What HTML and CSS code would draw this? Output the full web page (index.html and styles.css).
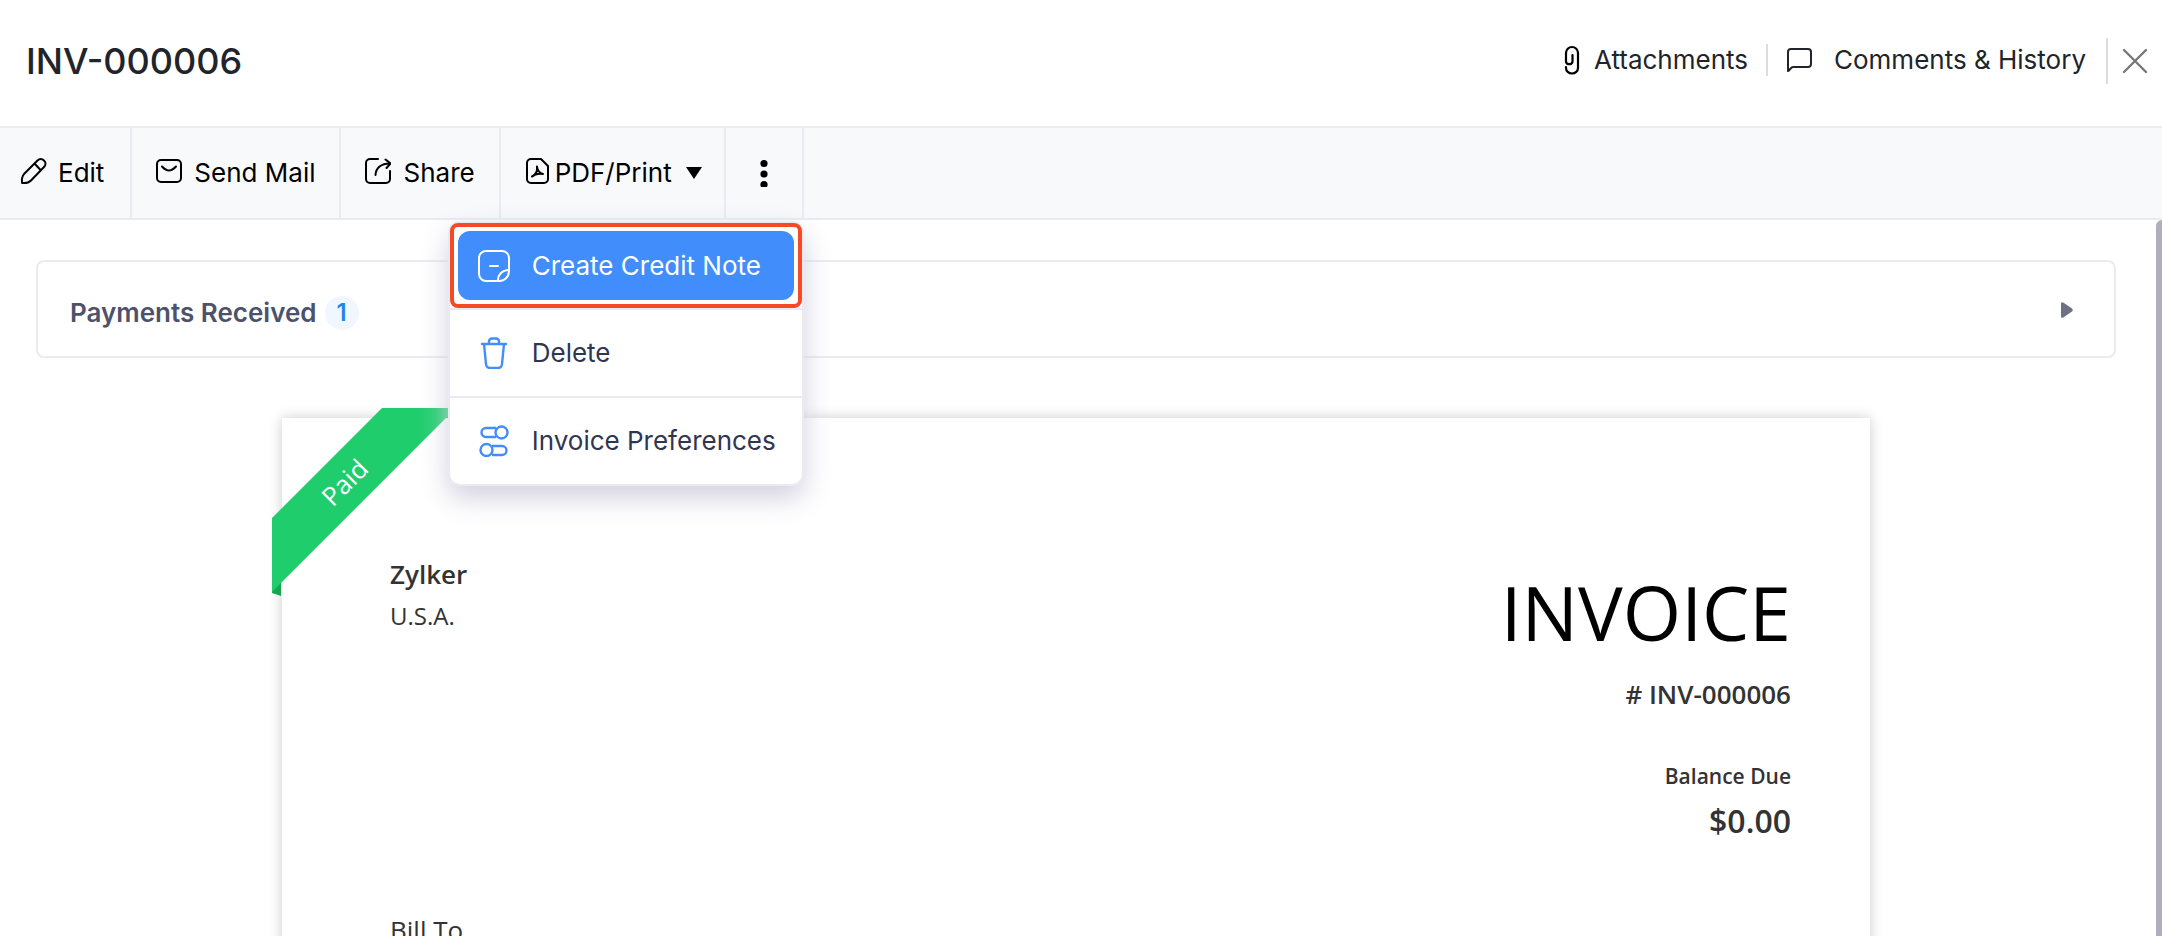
FILE: index.html
```html
<!DOCTYPE html>
<html lang="en">

<head>
    <meta charset="UTF-8">
    <meta name="viewport" content="width=device-width, initial-scale=1.0">
    <title>INV-000006</title>
    <link rel="stylesheet" href="styles.css">
</head>

<body>
    <header class="header">
        <h1>INV-000006</h1>
        <div class="header-actions">
            <button type="button" class="header-btn attachments">
                <svg width="16" height="30" viewBox="0 0 16 30" fill="none" stroke="#000" stroke-width="2.200" stroke-linecap="round">
                    <path d="M2 22v1a6 5.500 0 0 0 12 0V8A6 6 0 0 0 2 8v9a3.500 3.500 0 0 0 6.500 0v-7" />
                </svg>
                Attachments
            </button>
            <button type="button" class="header-btn comments">
                <svg width="26" height="26" viewBox="0 0 26 26" fill="none" stroke="currentColor" stroke-width="2" stroke-linejoin="round">
                    <path d="M2 24V5a3 3 0 0 1 3-3h17a3 3 0 0 1 3 3v12a3 3 0 0 1-3 3H7c-2 0-3 3-5 4z" />
                </svg>
                Comments &amp; History
            </button>
            <button type="button" class="close-btn" aria-label="Close">
                <svg width="26" height="26" viewBox="0 0 26 26" fill="none" stroke="#777" stroke-width="2.400" stroke-linecap="round">
                    <path d="M2 2l22 22M24 2L2 24" />
                </svg>
            </button>
        </div>
    </header>

    <nav class="toolbar">
        <button type="button" class="tool edit">
            <svg class="tool-icon" width="28" height="28" viewBox="0 0 28 28" fill="none" stroke="currentColor" stroke-width="2" stroke-linejoin="round">
                <path d="M2 26c-.4-3.600 0-6.500 2-9L17.500 3.500c2-2 4.500-2 6.500 0s2 4.500 0 6.500L11 23.500c-2.500 2.500-5.500 2.900-9 2.500zM14.500 6.500l6.500 7" />
            </svg>
            Edit
        </button>
        <button type="button" class="tool">
            <svg class="tool-icon" width="28" height="28" viewBox="0 0 28 28" fill="none" stroke="currentColor" stroke-width="2" stroke-linecap="round" stroke-linejoin="round">
                <rect x="3" y="3" width="24" height="22" rx="4" />
                <path d="M8 9.500c5 5.300 9 5.300 14 0" />
            </svg>
            Send Mail
        </button>
        <button type="button" class="tool">
            <svg class="tool-icon" width="28" height="28" viewBox="0 0 28 28" fill="none" stroke="currentColor" stroke-width="2" stroke-linecap="round" stroke-linejoin="round">
                <path d="M15 2H7a4 4 0 0 0-4 4v16a4 4 0 0 0 4 4h16a4 4 0 0 0 4-4v-8" />
                <path d="M12.500 18C13 11 18 6.500 27 6.500M22.500 2.500l5 4-4 4.500" />
            </svg>
            Share
        </button>
        <button type="button" class="tool pdf">
            <svg class="tool-icon" width="24" height="28" viewBox="0 0 24 28" fill="none" stroke="currentColor" stroke-width="2" stroke-linecap="round" stroke-linejoin="round">
                <path d="M6 2h10l7 7v13a4 4 0 0 1-4 4H6a4 4 0 0 1-4-4V6a4 4 0 0 1 4-4z" />
                <path d="M7 19.500C10.500 18 12.500 14 12 9.500c.5 4.500 2.500 6.500 6 7.500-3-.8-6 0-9 1" />
            </svg>
            PDF/Print
            <svg class="caret" width="16" height="12" viewBox="0 0 16 12"><path d="M0 0h16L8 12z" /></svg>
        </button>
        <div class="more">
            <button type="button" class="tool more-btn" aria-label="More" aria-expanded="true">
                <svg width="8" height="28" viewBox="0 0 8 28">
                    <circle cx="4" cy="4.500" r="3.600" />
                    <circle cx="4" cy="15" r="3.600" />
                    <circle cx="4" cy="25.500" r="3.600" />
                </svg>
            </button>
            <ul class="menu">
                <li class="highlighted">
                    <button type="button" class="menu-item active">
                        <svg width="32" height="32" viewBox="0 0 32 32" fill="none" stroke="currentColor" stroke-width="2" stroke-linecap="round" stroke-linejoin="round">
                            <path d="M20 31H8a7 7 0 0 1-7-7V8a7 7 0 0 1 7-7h16a7 7 0 0 1 7 7v13a10 10 0 0 1-11 10z" />
                            <path d="M20 31c-.5-6 4-11 11-11M12 16h8" />
                        </svg>
                        Create Credit Note
                    </button>
                </li>
                <li>
                    <button type="button" class="menu-item">
                        <svg width="32" height="32" viewBox="0 0 32 32" fill="none" stroke="#408dfb" stroke-width="2.400" stroke-linecap="round" stroke-linejoin="round">
                            <path d="M4 7h24M6 7l2 20a4 4 0 0 0 4 4h8a4 4 0 0 0 4-4l2-20M11 7V4.500a3 3 0 0 1 3-3h4a3 3 0 0 1 3 3V7" />
                        </svg>
                        Delete
                    </button>
                </li>
                <li>
                    <button type="button" class="menu-item">
                        <svg width="32" height="32" viewBox="0 0 32 32" fill="none" stroke="#408dfb" stroke-width="2.400">
                            <path d="M18 3H8a4.500 4.500 0 0 0 0 9h10M14 21h10a4.500 4.500 0 0 1 0 9H14" />
                            <circle cx="23.500" cy="7.500" r="6" />
                            <circle cx="8.500" cy="25" r="6" />
                        </svg>
                        Invoice Preferences
                    </button>
                </li>
            </ul>
        </div>
    </nav>

    <main class="content">
        <button type="button" class="payments">
            <span class="payments-label">Payments Received <span class="badge">1</span></span>
            <svg width="14" height="18" viewBox="0 0 14 18"><path d="M1 3c0-2 1-2.500 3-1l8 5.500c1 1 1 2 0 3L4 16c-2 1.500-3 1-3-1z" fill="#6c7184" /></svg>
        </button>

        <article class="sheet">
            <div class="ribbon">
                <svg class="ribbon-shape" width="196" height="190" viewBox="0 0 196 190">
                    <path d="M0 180l9-10v18l-9-3z" fill="#16a552" />
                    <path d="M174 0l10 8v2h-10z" fill="#16a552" />
                    <path d="M110 0h74L0 184v-74z" fill="#1fcd6d" />
                </svg>
                <span class="ribbon-text">Paid</span>
            </div>
            <div class="sheet-top">
                <div>
                    <div class="org-name">Zylker</div>
                    <div class="org-country">U.S.A.</div>
                </div>
                <div class="invoice-info">
                    <h2>INVOICE</h2>
                    <div class="invoice-number"># INV-000006</div>
                    <div class="balance-label">Balance Due</div>
                    <div class="balance">$0.00</div>
                </div>
            </div>
            <div class="bill-to">Bill To</div>
        </article>

        <div class="scroll-thumb"></div>
    </main>
</body>

</html>
```
FILE: styles.css
```css
/* General Styles */
* {
    box-sizing: border-box;
}

body {
    font-family: 'Inter', sans-serif;
    font-size: 26px;
    line-height: 32px;
    color: #21252b;
    background: #ffffff;
    margin: 0;
    height: 100vh;
    display: flex;
    flex-direction: column;
    overflow: hidden;
}

button {
    font: inherit;
    color: inherit;
    background: none;
    border: 0;
    margin: 0;
    padding: 0;
    display: flex;
    align-items: center;
    white-space: nowrap;
    cursor: pointer;
}

svg {
    flex: none;
}

/* Header */
.header {
    display: flex;
    justify-content: space-between;
    align-items: center;
    height: 128px;
    padding: 0 14px 4px 26px;
    border-bottom: 2px solid #ededed;
    flex: none;
}

h1 {
    font-size: 36px;
    line-height: 44px;
    font-weight: 500;
    margin: 0;
}

.header-actions {
    display: flex;
    align-items: center;
}

.header-btn {
    margin-bottom: 2px;
}

.attachments {
    gap: 14px;
    padding-right: 18px;
    border-right: 2px solid #dddddd;
}

.comments {
    gap: 22px;
    padding: 0 20px 0 18px;
}

.close-btn {
    height: 46px;
    padding-left: 14px;
    border-left: 2px solid #dddddd;
}

/* Toolbar */
.toolbar {
    display: flex;
    height: 92px;
    background: #f8f9fb;
    border-bottom: 2px solid #ebeaf2;
    flex: none;
}

.tool {
    height: 100%;
    gap: 12px;
    padding: 0 24px 0 22px;
    color: #000000;
    border-right: 2px solid #ebeaf2;
}

.tool-icon {
    margin-bottom: 4px;
}

.edit {
    gap: 10px;
    padding: 0 26px 0 20px;
}

.pdf {
    gap: 6px;
    padding: 0 22px 0 24px;
}

.caret {
    margin-left: 8px;
}

.more {
    position: relative;
}

.more-btn {
    padding: 0 34px;
}

/* Dropdown menu */
.menu {
    position: absolute;
    top: calc(100% + 3px);
    right: 0;
    z-index: 10;
    width: 356px;
    margin: 0;
    padding: 0;
    list-style: none;
    color: #313650;
    background: #ffffff;
    background-clip: padding-box;
    border: 2px solid #ebeaf2;
    border-radius: 12px;
    box-shadow: 0 12px 28px #d3d0df;
}

.menu li + li {
    border-top: 2px solid #ebeaf2;
}

.highlighted {
    padding: 4px;
    border: 4px solid #f64a27;
    border-radius: 8px;
}

.menu-item {
    width: 100%;
    height: 86px;
    gap: 22px;
    padding: 0 28px;
}

.menu-item.active {
    height: 69px;
    padding: 0 20px;
    color: #ffffff;
    background: #408dfb;
    border-radius: 12px;
}

/* Content */
.content {
    position: relative;
    flex: 1;
    min-height: 0;
    padding: 40px 46px 0 36px;
    overflow: hidden;
}

.payments {
    justify-content: space-between;
    width: 100%;
    height: 98px;
    padding: 2px 40px 0 32px;
    color: #4c526c;
    font-weight: 600;
    border: 2px solid #ebeaf2;
    border-radius: 8px;
}

.payments-label {
    display: flex;
    align-items: center;
    gap: 8px;
    padding-top: 6px;
}

.badge {
    width: 34px;
    height: 34px;
    border-radius: 50%;
    background: #f1f7fe;
    color: #2485e8;
    font-size: 24px;
    line-height: 34px;
    text-align: center;
}

/* Invoice sheet */
.sheet {
    position: relative;
    max-width: 1588px;
    min-height: 1200px;
    margin: 60px auto 0;
    padding: 136px 79px 0 108px;
    color: #333333;
    font-family: 'Open Sans', sans-serif;
    background: #ffffff;
    box-shadow: 0 0 12px #cccccc;
}

.sheet-top {
    display: flex;
    justify-content: space-between;
    height: 360px;
}

.org-name {
    font-weight: 600;
    line-height: 40px;
}

.org-country {
    font-size: 24px;
    line-height: 44px;
}

.invoice-info {
    text-align: right;
    font-weight: 600;
}

h2 {
    margin: 8px 0 14px;
    color: #000000;
    font-size: 75px;
    font-weight: 400;
    line-height: 100px;
}

.invoice-number {
    line-height: 36px;
}

.balance-label {
    margin-top: 46px;
    font-size: 21px;
    line-height: 36px;
}

.balance {
    font-size: 32px;
    line-height: 54px;
}

/* Paid ribbon */
.ribbon {
    position: absolute;
    top: -10px;
    left: -10px;
}

.ribbon-shape {
    display: block;
}

.ribbon-text {
    position: absolute;
    top: 58px;
    left: 46px;
    color: #ffffff;
    transform: rotate(-45deg);
}

/* Scrollbar */
.scroll-thumb {
    position: absolute;
    top: 0;
    right: 0;
    bottom: 0;
    width: 6px;
    background: #b0aebe;
    border-top-left-radius: 8px;
}
```
